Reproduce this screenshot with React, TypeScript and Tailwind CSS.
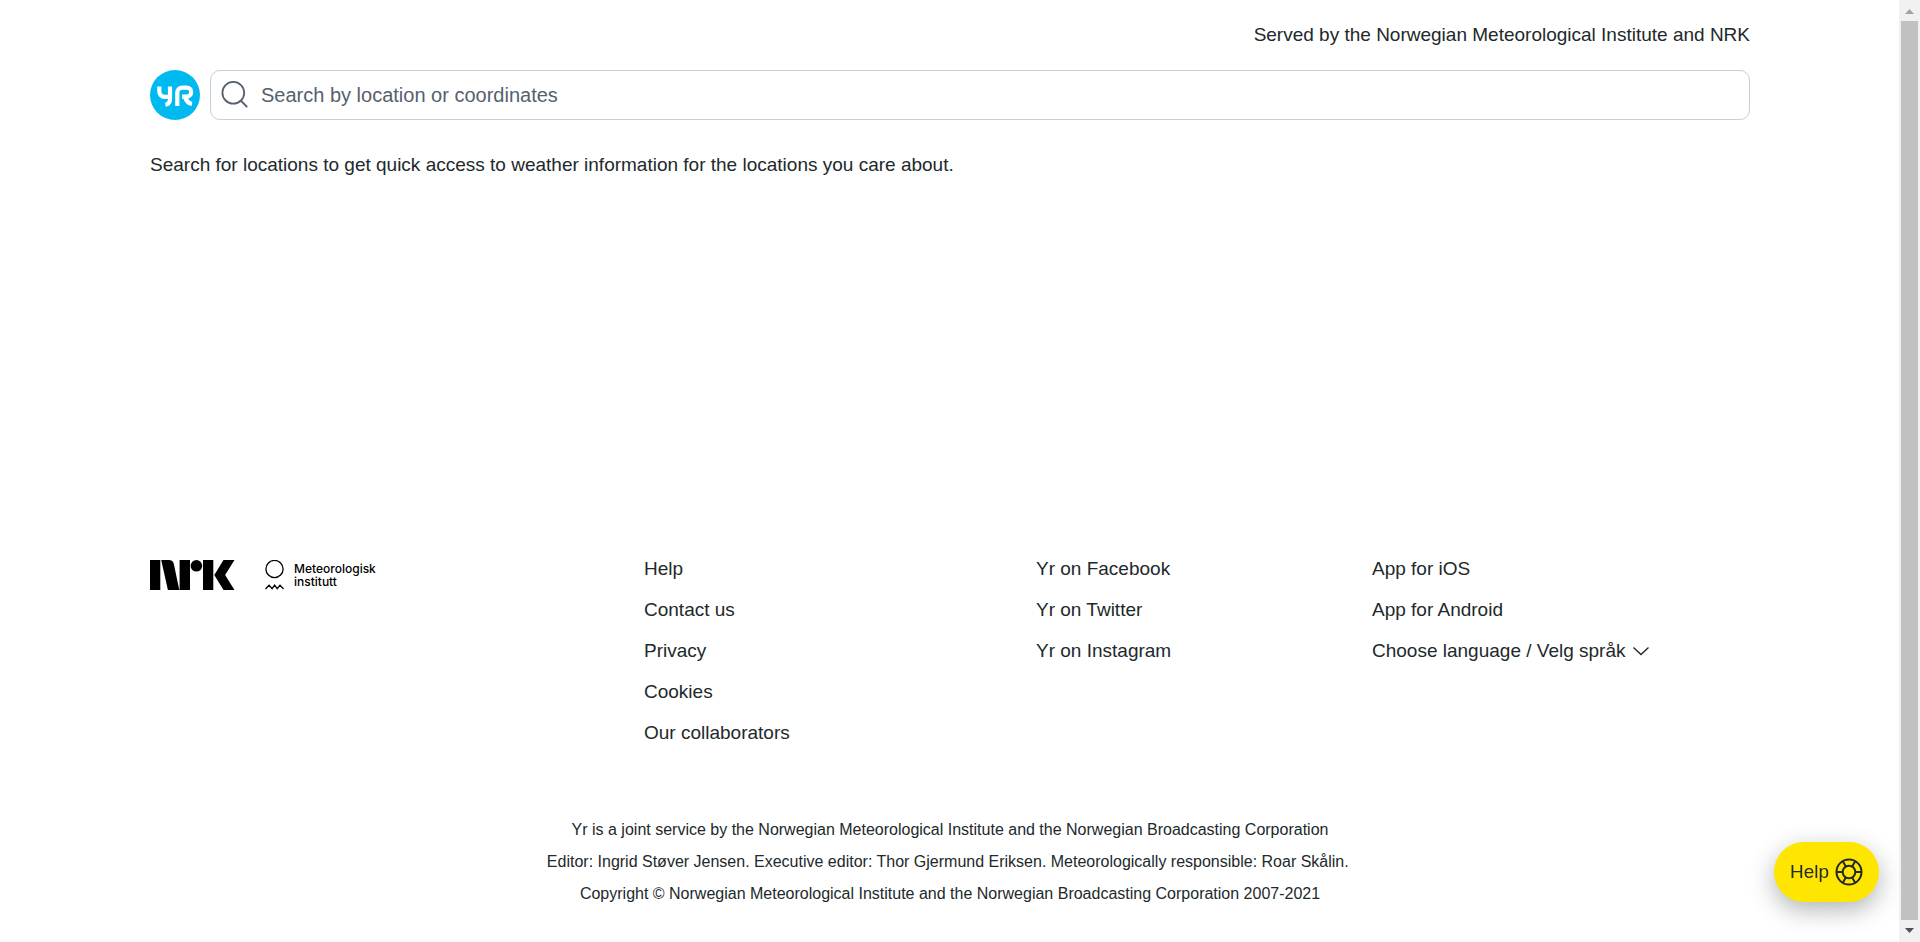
const columns = [
  ["Help", "Contact us", "Privacy", "Cookies", "Our collaborators"],
  ["Yr on Facebook", "Yr on Twitter", "Yr on Instagram"],
  ["App for iOS", "App for Android"],
];

function YrLogo() {
  return (
    <svg viewBox="0 0 50 50" className="size-[50px]" role="img" aria-label="Yr">
      <circle cx="25" cy="25" r="25" fill="#00b9f1" />
      <g fill="none" stroke="#fff" strokeWidth="4.2" strokeLinejoin="round">
        <path d="M9.300 16.500v4.500c0 3.600 2.200 5.900 5.600 5.900H20" />
        <path d="M20 16.500v12.500c0 3.200-1.600 5.200-4.600 5.700" />
        <path d="M27.300 36V22.800c0-3.200 2-5.200 5.200-5.200h4c2.800 0 4.700 1.900 4.700 4.500s-1.900 4.500-4.700 4.500H32M34.800 26.700c1.600 4.600 3.600 6.700 7.200 7.200" />
      </g>
    </svg>
  );
}

function NrkLogo() {
  return (
    <svg viewBox="0 0 85 30" className="h-[30px] w-[85px]" role="img" aria-label="NRK">
      <path d="M0 0h10.300v30H0zM11.200 0h7.400c3.200 0 4.600 1.200 5.300 4.200L29.300 30H17.900zM29.600 0h10.400v30H29.600zM53 0h10.300v30H53zM73.500 0h11L75.100 15l9.400 15h-11L64.300 15z" />
      <circle cx="46.400" cy="5.800" r="5.800" />
    </svg>
  );
}

function MetLogo() {
  return (
    <div className="flex gap-2.5">
      <svg viewBox="0 0 19 30" className="h-[30px] w-[19px]" fill="none" stroke="#000" strokeWidth="1.300" aria-hidden="true">
        <circle cx="9.500" cy="9" r="8.600" />
        <path d="M.5 29l3.600-3.800 3 3.400 2.500-3.400 2.600 3.400 2.800-3.400 3.600 3.800" />
      </svg>
      <p className="pt-0.5 font-[Inter,sans-serif] text-xs leading-[13px] font-medium text-black">
        Meteorologisk
        <br />
        institutt
      </p>
    </div>
  );
}

function HelpIcon() {
  return (
    <svg viewBox="0 0 28 28" className="size-7" fill="none" stroke="currentColor" strokeWidth="2" aria-hidden="true">
      <circle cx="14" cy="14" r="12.500" />
      <circle cx="14" cy="14" r="6.300" />
      <path d="M1.300 14h6.400M20.300 14h6.400M10.850 8.540L7.650 3M17.150 8.540L20.350 3M10.850 19.460L7.650 25M17.150 19.460L20.350 25" />
    </svg>
  );
}

export default function App() {
  return (
    <div className="flex min-h-screen bg-white font-['Liberation_Sans',Arial,sans-serif] text-[19px] text-[#21292b]">
      <div className="flex min-w-0 flex-1 flex-col pr-[149px] pl-[150px]">
        <header>
          <p className="pt-[21px] text-right leading-7">Served by the Norwegian Meteorological Institute and NRK</p>
          <div className="mt-[21px] flex gap-2.5">
            <a href="#home" aria-label="Yr home">
              <YrLogo />
            </a>
            <label className="flex h-[50px] flex-1 items-center gap-2.5 rounded-[10px] border border-[#c3d0d8] px-2.5 text-[#56616c]">
              <svg viewBox="0 0 30 30" className="size-[30px]" fill="none" stroke="currentColor" strokeWidth="1.800" aria-hidden="true">
                <circle cx="12.300" cy="12.800" r="10.900" />
                <path d="M19.800 20.500l6.400 6.600" />
              </svg>
              <input
                type="text"
                aria-label="Search by location or coordinates"
                placeholder="Search by location or coordinates"
                className="min-w-0 flex-1 bg-transparent text-[20px] outline-none placeholder:text-[#56616c]"
              />
            </label>
          </div>
        </header>

        <main className="pt-[31px]">
          <p className="leading-7">
            Search for locations to get quick access to weather information for the locations you care about.
          </p>
        </main>

        <footer className="mt-[369px]">
          <div className="grid grid-cols-[494fr_392fr_336fr_378fr]">
            <div className="flex gap-[30px] pt-3">
              <NrkLogo />
              <MetLogo />
            </div>
            {columns.map((links, index) => (
              <ul key={links[0]} className="leading-[41px]">
                {links.map((text) => (
                  <li key={text}>
                    <a href="#info">{text}</a>
                  </li>
                ))}
                {index === 2 && (
                  <li>
                    <button type="button" className="flex items-center gap-1.5">
                      Choose language / Velg språk
                      <svg viewBox="0 0 18 10" className="h-2.5 w-[18px]" fill="none" stroke="currentColor" strokeWidth="1.400" aria-hidden="true">
                        <path d="M1.500 1.500L9 8.500l7.500-7" />
                      </svg>
                    </button>
                  </li>
                )}
              </ul>
            ))}
          </div>
          <div className="mt-[61px] text-center text-base leading-8">
            <p>Yr is a joint service by the Norwegian Meteorological Institute and the Norwegian Broadcasting Corporation</p>
            <p>
              Editor: Ingrid Støver Jensen. Executive editor: Thor Gjermund Eriksen. Meteorologically responsible: Roar
              Skålin.{"\u00a0"}
            </p>
            <p>Copyright © Norwegian Meteorological Institute and the Norwegian Broadcasting Corporation 2007-2021</p>
          </div>
        </footer>
      </div>

      <button
        type="button"
        className="fixed right-[41px] bottom-10 flex h-[60px] items-center gap-1.5 rounded-full bg-[#ffe600] px-4 shadow-[0_8px_24px_rgba(33,41,43,0.35)]"
      >
        Help
        <HelpIcon />
      </button>

      <div className="sticky top-0 flex h-screen w-[21px] flex-col items-center bg-[#f1f1f1]" aria-hidden="true">
        <svg viewBox="0 0 21 21" className="size-[21px]">
          <path d="M6 14l4.500-5 4.500 5z" fill="#a3a3a3" />
        </svg>
        <div className="w-[17px] flex-1 bg-[#c1c1c1]" />
        <svg viewBox="0 0 21 22" className="h-[22px] w-[21px]">
          <path d="M6 8h9l-4.500 5z" fill="#505050" />
        </svg>
      </div>
    </div>
  );
}
